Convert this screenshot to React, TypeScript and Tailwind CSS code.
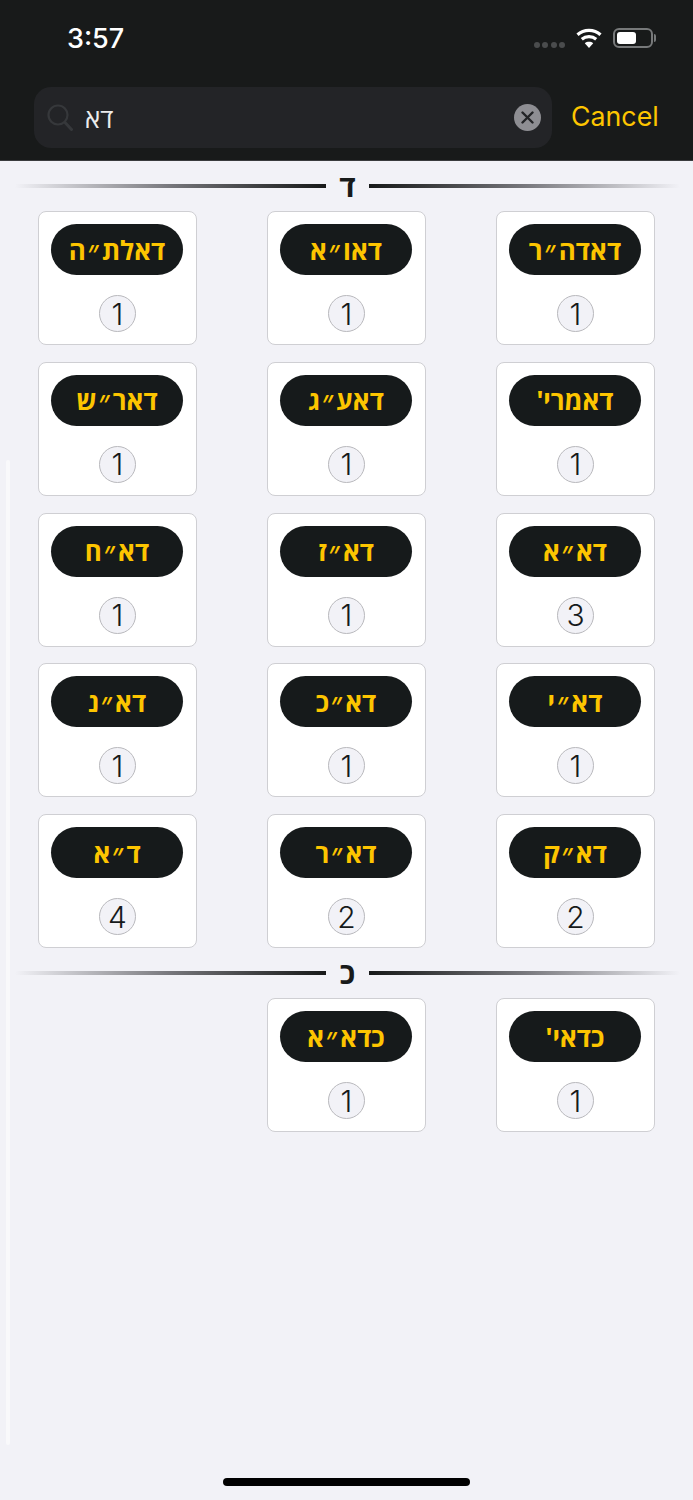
import React from 'react';

interface Entry {
  label: string;
  count: number;
}

const sections: { letter: string; entries: Entry[] }[] = [
  {
    letter: 'ד',
    entries: [
      { label: 'דאדה״ר', count: 1 },
      { label: 'דאו״א', count: 1 },
      { label: 'דאלת״ה', count: 1 },
      { label: "דאמרי'", count: 1 },
      { label: 'דאע״ג', count: 1 },
      { label: 'דאר״ש', count: 1 },
      { label: 'דא״א', count: 3 },
      { label: 'דא״ז', count: 1 },
      { label: 'דא״ח', count: 1 },
      { label: 'דא״י', count: 1 },
      { label: 'דא״כ', count: 1 },
      { label: 'דא״נ', count: 1 },
      { label: 'דא״ק', count: 2 },
      { label: 'דא״ר', count: 2 },
      { label: 'ד״א', count: 4 },
    ],
  },
  {
    letter: 'כ',
    entries: [
      { label: "כדאי'", count: 1 },
      { label: 'כדא״א', count: 1 },
    ],
  },
];

const WifiIcon = () => (
  <svg width="26" height="20" viewBox="0 0 26 20" fill="none" stroke="#fff" strokeWidth="3.2">
    <path d="M1.5 6.8C7.8 1 18.2 1 24.5 6.8" />
    <path d="M5.8 11.2C9.8 7.8 16.2 7.8 20.2 11.2" />
    <path d="M13 20l-4.2-4.8c2.3-1.9 6.1-1.9 8.4 0z" fill="#fff" stroke="none" />
  </svg>
);

const BatteryIcon = () => (
  <div className="flex items-center">
    <div className="w-[40px] h-[20px] rounded-[6px] border-2 border-[#77797a] p-[2px]">
      <div className="w-[19px] h-full rounded-[3px] bg-white" />
    </div>
    <div className="w-[2px] h-[8px] ml-[1px] rounded-r-sm bg-[#77797a]" />
  </div>
);

const SearchIcon = () => (
  <svg width="26" height="27" viewBox="0 0 26 27" fill="none" stroke="#36383b" strokeWidth="2.2" strokeLinecap="round">
    <circle cx="11" cy="11" r="9.5" />
    <path d="M18 18.5L24.5 25.5" strokeWidth="3" />
  </svg>
);

const SectionDivider = ({ letter }: { letter: string }) => (
  <div className="flex items-center h-[26px] pl-[15px] pr-[13px]">
    <div className="flex-1 h-[4px] bg-gradient-to-r from-transparent via-[#77777c] to-[#181a1a]" />
    <div className="w-[43px] text-center text-[30px] leading-[26px] font-bold text-[#181a1a]" dir="rtl">
      {letter}
    </div>
    <div className="flex-1 h-[4px] bg-gradient-to-l from-transparent via-[#77777c] to-[#181a1a]" />
  </div>
);

// the gershayim mark comes from another font, it is narrower and slanted there
const Label = ({ text }: { text: string }) => {
  const parts = text.split('״');
  if (parts.length === 1) return <>{text}</>;
  return (
    <>
      {parts[0]}
      <span className="font-['Roboto'] text-[32px] leading-[0] mx-[2px] align-[-3px]">״</span>
      {parts[1]}
    </>
  );
};

const EntryCard = ({ label, count }: Entry) => (
  <div className="h-[134px] bg-white border border-[#cfcfd3] rounded-[8px] px-[12px] pt-[12px] flex flex-col items-center">
    <div className="w-[132px] self-end h-[51px] rounded-full bg-[#161a1b] flex items-center justify-center text-[#fdc500] text-[26px] font-bold leading-none">
      <span>
        <Label text={label} />
      </span>
    </div>
    <div className="mt-[20px] w-[37px] h-[37px] rounded-full bg-[#f2f2f7] border border-[#b9b9bd] flex items-center justify-center text-[#161a1b] text-[30px] font-[350] leading-none font-['Inter',sans-serif]">
      {count}
    </div>
  </div>
);

export default function App() {
  return (
    <div className="relative w-[693px] h-[1500px] overflow-hidden bg-[#f2f2f7] font-['Noto_Sans','Open_Sans',sans-serif]">
      <header className="h-[161px] bg-[#181a1a] border-b border-[#3a3c3e]">
        <div className="h-[87px] flex items-start pl-[67px] pr-[37px] pt-[22px]">
          <span className="mt-[1px] text-white text-[27px] leading-[32px] font-medium font-['Inter',sans-serif]">3:57</span>
          <div className="ml-auto flex items-start mt-[6px]">
            <div className="flex gap-[2.33px] mt-[14px] mr-[11px]">
              <span className="w-[6px] h-[6px] rounded-full bg-[#4a4c4d]" />
              <span className="w-[6px] h-[6px] rounded-full bg-[#4a4c4d]" />
              <span className="w-[6px] h-[6px] rounded-full bg-[#4a4c4d]" />
              <span className="w-[6px] h-[6px] rounded-full bg-[#4a4c4d]" />
            </div>
            <div className="mr-[11px]">
              <WifiIcon />
            </div>
            <BatteryIcon />
          </div>
        </div>
        <div className="flex items-center pl-[34px]">
          <div className="w-[518px] h-[61px] rounded-[17px] bg-[#232427] flex items-center pl-[13px] pr-[11px]">
            <SearchIcon />
            <span className="ml-[12px] text-[#ececec] text-[26px] leading-none" dir="rtl">דא</span>
            <div className="ml-auto w-[27px] h-[27px] rounded-full bg-[#8e8e93] flex items-center justify-center">
              <svg width="13" height="13" viewBox="0 0 13 13" stroke="#232427" strokeWidth="2.4" strokeLinecap="round">
                <path d="M1.5 1.5l10 10M11.5 1.5l-10 10" />
              </svg>
            </div>
          </div>
          <span className="ml-[19px] -mt-[2px] text-[#fdc500] text-[26.75px] leading-none font-['Inter',sans-serif]">Cancel</span>
        </div>
      </header>

      <main className="pt-[11.5px]">
        {sections.map((section) => (
          <section key={section.letter} className="mb-[11.5px]">
            <SectionDivider letter={section.letter} />
            <div dir="rtl" className="grid grid-cols-[repeat(3,159px)] gap-x-[70px] gap-y-[16.75px] pr-[38px] mt-[12.5px]">
              {section.entries.map((entry) => (
                <EntryCard key={entry.label} {...entry} />
              ))}
            </div>
          </section>
        ))}
      </main>

      {/* scroll indicator */}
      <div className="absolute left-[6px] top-[460px] w-[4px] h-[985px] rounded-full bg-[#f9f9fb]" />
      {/* home indicator */}
      <div className="absolute left-[223px] top-[1478px] w-[247px] h-[8px] rounded-full bg-black" />
    </div>
  );
}
